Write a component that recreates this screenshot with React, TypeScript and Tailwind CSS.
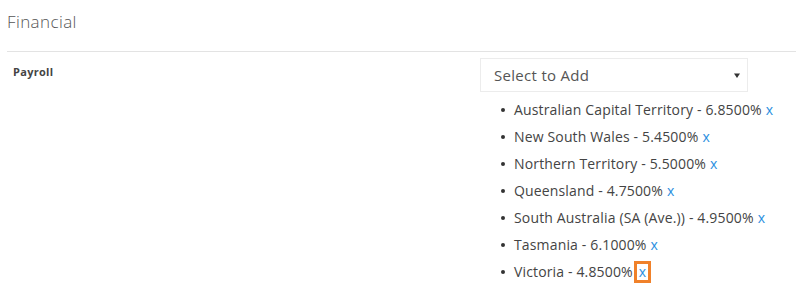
import React from "react";

const rates = [
  { name: "Australian Capital Territory", rate: "6.8500%" },
  { name: "New South Wales", rate: "5.4500%" },
  { name: "Northern Territory", rate: "5.5000%" },
  { name: "Queensland", rate: "4.7500%" },
  { name: "South Australia (SA (Ave.))", rate: "4.9500%" },
  { name: "Tasmania", rate: "6.1000%" },
  { name: "Victoria", rate: "4.8500%" },
];

export default function App() {
  return (
    <div
      className="w-[796px] h-[283px] overflow-hidden bg-white text-[#444]"
      style={{ fontFamily: "'Open Sans', 'Noto Sans', sans-serif" }}
    >
      {/* section header */}
      <div className="ml-[7px] h-[52px] border-b border-[#e3e3e3] pt-[9px]">
        <h3 className="text-[17px] font-light tracking-[0.4px] text-[#555] leading-[26px]">Financial</h3>
      </div>

      <div className="flex pt-[6px]">
        <div className="w-[480px] pl-[13px] pt-[7px] text-[11px] font-bold tracking-[0.3px] text-[#444] leading-[14px]">
          Payroll
        </div>

        <div className="w-[268px]">
          <div className="h-[34px] border border-[#ececec] flex items-center justify-between pl-[13px] pr-[6px] text-[15px] tracking-[0.3px] text-[#555]">
            <span>Select to Add</span>
            <svg width="8" height="8" viewBox="0 0 8 8">
              <path d="M1 2.5 L7 2.5 L4 7 Z" fill="#333" />
            </svg>
          </div>

          <ul className="mt-[4px]">
            {rates.map((r, i) => (
              <li key={r.name} className="h-[27px] flex items-center pl-[21px] text-[14px] tracking-[0.15px] text-[#444]">
                <span className="shrink-0 w-[4px] h-[4px] rounded-full bg-[#333] mr-[9px]"></span>
                <span className="whitespace-nowrap">
                  {r.name} - {r.rate}
                </span>
                {i === rates.length - 1 ? (
                  <span className="ml-[1px] h-[22px] px-[2px] border-[3px] border-[#f0812a] flex items-center text-[#2a8fe0] leading-none">
                    x
                  </span>
                ) : (
                  <span className="ml-[4px] text-[#2a8fe0]">x</span>
                )}
              </li>
            ))}
          </ul>
        </div>
      </div>
    </div>
  );
}
